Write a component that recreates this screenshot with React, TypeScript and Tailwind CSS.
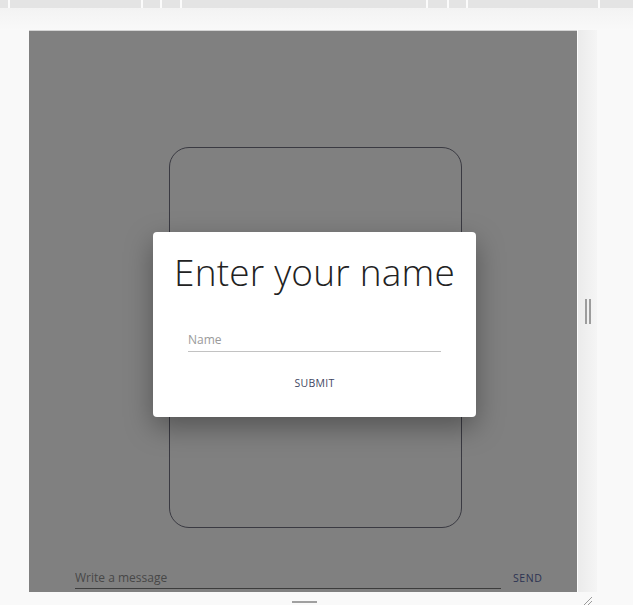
import React from 'react';

const ticks = [8, 141, 160, 180, 426, 447, 466, 598];

const RulerBar: React.FC = () => (
    <div className="flex h-2 bg-[#e4e4e4]">
        {ticks.map((x, i) => (
            <div
                key={x}
                className="w-[2px] h-full bg-[#fbfbfb]"
                style={{ marginLeft: i === 0 ? x : x - ticks[i - 1] - 2 }}
            />
        ))}
    </div>
);

const NameDialog: React.FC = () => (
    <div className="absolute left-[124px] top-[201px] w-[323px] h-[185px] bg-white rounded-[4px] shadow-[0_10px_28px_rgba(0,0,0,0.35)] flex flex-col items-center">
        <h1 className="mt-[15px] text-[37px] leading-[50px] font-light text-[#222] tracking-[0.2px]">Enter your name</h1>
        <div className="mt-[29px] w-[253px] ml-[16px] self-start pl-[19px]">
            <input
                placeholder="Name"
                className="w-[253px] bg-transparent text-[12px] text-[#333] placeholder:text-[#9a9a9a] outline-none border-b border-[#c2c2c2] pb-[2px]"
            />
        </div>
        <button className="mt-[24px] text-[10.5px] text-[#3f4762] tracking-[0.3px]">SUBMIT</button>
    </div>
);

const ChatPanel: React.FC = () => (
    <div className="relative w-[548px] h-[562px] bg-[#808080] border-t border-[#d4d4d4] flex flex-col">
        <div className="ml-[140px] mt-[116px] w-[293px] h-[381px] rounded-[20px] border border-[#3a3a42]" />
        <div className="mt-auto mb-[3px] flex items-end">
            <input
                placeholder="Write a message"
                className="ml-[46px] w-[426px] bg-transparent text-[12px] text-[#333] placeholder:text-[#474747] outline-none border-b border-[#3c3c3c] pb-[1px]"
            />
            <button className="ml-[12px] mb-[2px] text-[10.5px] tracking-[0.6px] text-[#2c3352]">SEND</button>
        </div>
        <NameDialog />
    </div>
);

const App: React.FC = () => {
    return (
        <div className="w-[633px] h-[605px] overflow-hidden bg-[#f9f9f9] font-['Open_Sans',sans-serif]">
            <RulerBar />
            <div className="h-[22px] bg-gradient-to-b from-[#f3f3f3] to-[#f9f9f9]" />
            <div className="flex pl-[29px]">
                <ChatPanel />
                <div className="w-[20px] h-[562px] bg-gradient-to-r from-[#ebebeb] to-[#f5f5f5] border-l border-[#fdfdfd] flex items-center justify-center gap-[2px]">
                    <div className="w-[2px] h-[25px] bg-[#9c9c9c]" />
                    <div className="w-[2px] h-[25px] bg-[#9c9c9c]" />
                </div>
            </div>
            <div className="flex items-start h-[13px]">
                <div className="ml-[292px] mt-[9px] w-[25px] h-[2px] bg-[#a0a0a0]" />
                <svg className="ml-[266px] mt-[4px]" width="10" height="10" viewBox="0 0 10 10">
                    <path d="M9 1 L1 9 M9 5 L5 9" stroke="#9a9a9a" strokeWidth="1" />
                </svg>
            </div>
        </div>
    );
};

export default App;
